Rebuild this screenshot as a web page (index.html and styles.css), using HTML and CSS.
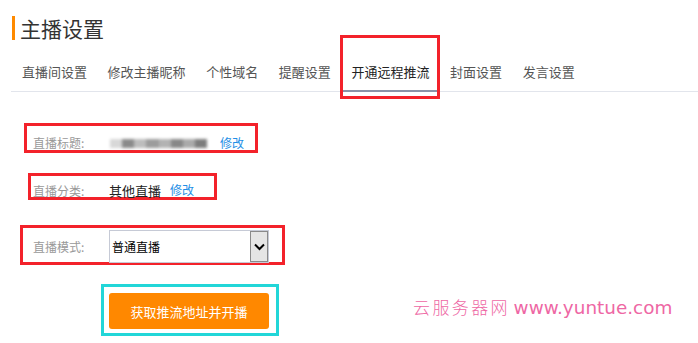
FILE: index.html
```html
<!DOCTYPE html>
<html lang="zh">
<head>
<meta charset="utf-8">
<title>主播设置</title>
<link rel="stylesheet" href="styles.css">
</head>
<body>
<div class="page">
  <h1 class="title">主播设置</h1>
  <nav class="tabs">
    <a class="tab">直播间设置</a>
    <a class="tab">修改主播昵称</a>
    <a class="tab">个性域名</a>
    <a class="tab">提醒设置</a>
    <a class="tab active">开通远程推流<span class="mark mark-tab"></span></a>
    <a class="tab">封面设置</a>
    <a class="tab">发言设置</a>
  </nav>

  <div class="form">
    <div class="row row-title">
      <span class="label">直播标题:</span>
      <span class="blur"><i></i><i></i><i></i><i></i><i></i><i></i><i></i><i></i></span>
      <a class="edit edit-title">修改</a>
    </div>
    <div class="row row-cat">
      <span class="label">直播分类:</span>
      <span class="value">其他直播</span>
      <a class="edit edit-cat">修改</a>
    </div>
    <div class="row row-mode">
      <span class="label">直播模式:</span>
      <div class="select">
        <span class="select-text">普通直播</span>
        <span class="select-btn">
          <svg width="11" height="8" viewBox="0 0 11 8"><path d="M1 1.5 L5.5 6 L10 1.5" fill="none" stroke="#000" stroke-width="2"/></svg>
        </span>
      </div>
    </div>
    <div class="btn-wrap">
      <button class="btn">获取推流地址并开播</button>
    </div>
  </div>

  <div class="watermark"><span class="wm-cn">云服务器网</span> <span class="wm-en">www.yuntue.com</span></div>
</div>
</body>
</html>
```

FILE: styles.css
```css
* { box-sizing: border-box; margin: 0; padding: 0; }
html, body { background: #fff; }
body {
  width: 698px;
  height: 343px;
  overflow: hidden;
  font-family: "Noto Sans CJK SC", "Liberation Sans", sans-serif;
  color: #333;
}
.page { position: relative; height: 343px; padding-top: 16px; }

.title {
  margin-left: 12px;
  border-left: 3px solid #ff8a00;
  padding-left: 5px;
  font-size: 21px;
  line-height: 24px;
  height: 24px;
  font-weight: 400;
  color: #333;
}

.tabs {
  display: flex;
  margin-top: 22px;
  margin-left: 11px;
  border-bottom: 1px solid #e2e5ec;
  padding-left: 1px;
}
.tab {
  position: relative;
  display: block;
  padding: 0 10px 9px;
  margin-right: 0.6px;
  font-size: 13px;
  line-height: 20px;
  color: #555;
  white-space: nowrap;
}
.tab.active {
  color: #222;
  border-bottom: 2px solid #8a93a8;
  margin-bottom: -1px;
  padding-bottom: 8px;
}
.mark-tab {
  position: absolute;
  left: -1px;
  right: -1px;
  top: -27px;
  bottom: -9px;
  border: 3px solid #f3222a;
}

.form { margin-top: 31px; }
.row {
  display: inline-flex;
  align-items: center;
  border: 3px solid #f3222a;
  font-size: 12px;
  line-height: 14px;
}
.label { color: #999; display: inline-block; }

.row-title {
  margin-left: 24px;
  padding: 10px 11px 0 6px;
  height: 30px;
  align-items: flex-start;
}
.row-title .label { width: 77px; }
.blur {
  display: inline-flex;
  width: 97px;
  height: 9px;
  margin-top: 3px;
  filter: blur(1.6px);
}
.blur i { flex: 1; background: #999; }
.blur i:nth-child(1) { background: #d8d8d8; }
.blur i:nth-child(2) { background: #8a8a8a; }
.blur i:nth-child(3) { background: #bdbdbd; }
.blur i:nth-child(4) { background: #9c9c9c; }
.blur i:nth-child(5) { background: #b3b3b3; }
.blur i:nth-child(6) { background: #888; }
.blur i:nth-child(7) { background: #aaa; }
.blur i:nth-child(8) { background: #7d7d7d; }
.edit { color: #1f8fe6; }
.edit-title { margin-left: 13px; }

.row-cat {
  display: flex;
  width: 189px;
  margin-top: 20px;
  margin-left: 28px;
  padding: 7px 20px 0 2px;
  height: 27px;
  align-items: flex-start;
}
.row-cat .label { width: 76px; margin-top: 1px; }
.value { font-size: 13px; color: #222; line-height: 14px; margin-top: 1px; }
.edit-cat { margin-left: 9px; }

.row-mode {
  display: flex;
  width: 265px;
  margin-top: 25px;
  margin-left: 20px;
  height: 40px;
  padding: 2px 13px 0 10px;
  align-items: flex-start;
}
.row-mode .label { width: 76px; margin-top: 10px; }
.select {
  display: flex;
  width: 160px;
  height: 33px;
  border: 1px solid #c6cad6;
  background: #fff;
}
.select-text {
  flex: 1;
  padding-left: 2px;
  font-size: 12px;
  line-height: 31px;
  color: #000;
}
.select-btn {
  width: 18px;
  background: #e5e5e5;
  border: 1px solid #8a8a8a;
  display: flex;
  align-items: center;
  justify-content: center;
}

.btn-wrap {
  width: 178px;
  height: 52px;
  margin-top: 19px;
  margin-left: 101px;
  border: 3px solid #22d6d8;
  padding: 6px 7px 0 5px;
}
.btn {
  display: block;
  width: 160px;
  height: 36px;
  border: none;
  border-radius: 3px;
  background: #ff8800;
  color: #fff;
  font-family: "Noto Sans CJK SC", sans-serif;
  font-size: 13px;
}

.watermark {
  position: absolute;
  left: 413px;
  top: 296px;
  color: #ee67a4;
  white-space: nowrap;
  line-height: 22px;
}
.wm-cn {
  font-family: "Noto Sans CJK SC", sans-serif;
  font-size: 17px;
  letter-spacing: 2.4px;
  font-weight: 300;
}
.wm-en {
  font-family: "DejaVu Sans", sans-serif;
  font-size: 18.4px;
  font-weight: 400;
}
```
